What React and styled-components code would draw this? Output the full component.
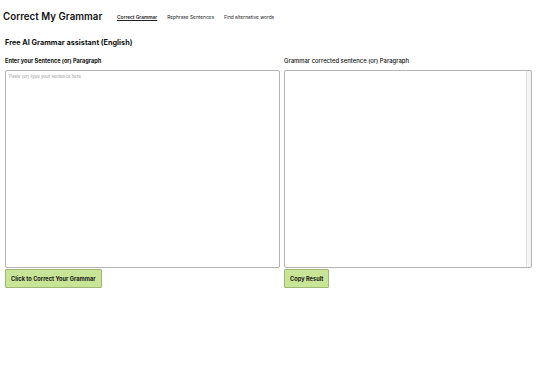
import React from 'react';
import styled, { createGlobalStyle } from 'styled-components';

const GlobalStyle = createGlobalStyle`
    body {
        margin: 0;
        background: #ffffff;
        font-family: Inter, "Liberation Sans", sans-serif;
        color: #111111;
    }
`

const Header = styled.header`
    display: flex;
    align-items: center;
    padding: 9px 3px 0 3px;
    height: 15px;
`

const Title = styled.h1`
    margin: 0;
    font-size: 9.7px;
    font-weight: 600;
    letter-spacing: 0.05px;
    width: 114px;
`

const Nav = styled.nav`
    display: flex;
    gap: 10px;
    padding-top: 1px;
`

const NavLink = styled.a`
    font-size: 4.8px;
    color: #222;
    text-decoration: ${props => props.active ? "underline" : "none"};
    font-weight: ${props => props.active ? 600 : 400};
    cursor: pointer;
`

const Main = styled.main`
    padding: 0 5px;
`

const Subtitle = styled.h2`
    margin: 14px 0 0 0;
    font-size: 7.3px;
    font-weight: 700;
    line-height: 10px;
`

const Columns = styled.div`
    display: grid;
    grid-template-columns: 275px 1fr;
    column-gap: 4px;
    margin-top: 9px;
`

const Column = styled.div`
    display: flex;
    flex-direction: column;
`

const Label = styled.label`
    font-size: ${props => props.light ? "5.9px" : "5.6px"};
    font-weight: ${props => props.light ? 500 : 700};
    line-height: 8px;
    margin-bottom: 5px;
`

const TextArea = styled.textarea`
    box-sizing: border-box;
    width: ${props => props.narrow ? "248px" : "100%"};
    height: 198px;
    resize: none;
    border: 1px solid #b3b3b3;
    border-radius: 2px;
    padding: 3px;
    font-family: Inter, "Liberation Sans", sans-serif;
    font-size: 4.4px;
    background: ${props => props.narrow
        ? "linear-gradient(to left, #f4f4f4 4px, #e4e4e4 4px, #e4e4e4 5px, #ffffff 5px)"
        : "#ffffff"};
    &::placeholder {
        color: #9a9a9a;
    }
`

const ActionButton = styled.button`
    align-self: flex-start;
    margin-top: 1px;
    height: 19px;
    padding: 0 5px;
    background: #c8e597;
    border: 1px solid #9fb874;
    border-radius: 1px;
    font-family: Inter, "Liberation Sans", sans-serif;
    font-size: 5.7px;
    font-weight: 700;
    color: #1a1a1a;
    cursor: pointer;
`

export default function App() {
    return (
        <>
            <GlobalStyle />
            <Header>
                <Title>Correct My Grammar</Title>
                <Nav>
                    <NavLink active>Correct Grammar</NavLink>
                    <NavLink>Rephrase Sentences</NavLink>
                    <NavLink>Find alternative words</NavLink>
                </Nav>
            </Header>
            <Main>
                <Subtitle>Free AI Grammar assistant (English)</Subtitle>
                <Columns>
                    <Column>
                        <Label>Enter your Sentence (or) Paragraph</Label>
                        <TextArea placeholder="Paste (or) type your sentence here" />
                        <ActionButton>Click to Correct Your Grammar</ActionButton>
                    </Column>
                    <Column>
                        <Label light>Grammar corrected sentence (or) Paragraph</Label>
                        <TextArea narrow readOnly />
                        <ActionButton>Copy Result</ActionButton>
                    </Column>
                </Columns>
            </Main>
        </>
    )
}
